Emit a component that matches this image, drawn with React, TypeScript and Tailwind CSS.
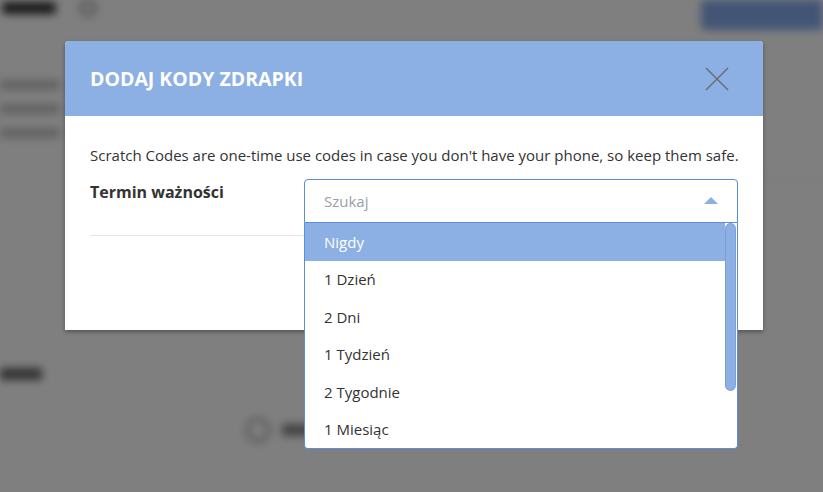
import React from "react";

const options = ["Nigdy", "1 Dzień", "2 Dni", "1 Tydzień", "2 Tygodnie", "1 Miesiąc"];

function BackgroundPage() {
  return (
    <div className="w-full h-full blur-[4px] bg-white">
      <div className="flex items-start justify-between">
        <div className="flex items-center gap-6 pl-[2px] pt-0">
          <div className="h-[12px] w-[54px] bg-[#333] rounded-sm" />
          <div className="h-[16px] w-[16px] rounded-full border-2 border-[#666]" />
        </div>
        <div className="h-[30px] w-[122px] bg-[#86aaeb] rounded-sm" />
      </div>
      <div className="flex flex-col gap-[14px] pt-[50px]">
        <div className="h-[10px] w-[60px] bg-[#c4c4c4]" />
        <div className="h-[10px] w-[60px] bg-[#c4c4c4]" />
        <div className="h-[10px] w-[60px] bg-[#c4c4c4]" />
      </div>
      <div className="ml-auto mt-[40px] h-[2px] w-[80px] bg-[#eeeeee]" />
      <div className="pt-[188px]">
        <div className="h-[12px] w-[42px] bg-[#666]" />
      </div>
      <div className="flex items-center gap-3 pl-[246px] pt-[38px]">
        <div className="h-[24px] w-[24px] rounded-full border-2 border-[#777]" />
        <div className="h-[12px] w-[50px] bg-[#888]" />
      </div>
    </div>
  );
}

function CodesSelect() {
  return (
    <div className="relative w-[434px]">
      <div className="h-[44px] border border-[#5b8dd8] rounded-t-[4px] bg-white flex items-center justify-between pl-[19px] pr-[19px]">
        <span className="text-[15px] text-[#9aa0a8]">Szukaj</span>
        <svg width="14" height="8" viewBox="0 0 14 8" className="fill-[#8cb0e3]">
          <path d="M7 0 L14 7 L0 7 Z" />
        </svg>
      </div>
      <div className="absolute left-0 right-0 top-full bg-white border border-t-0 border-[#5b8dd8] rounded-b-[4px] flex">
        <ul className="flex-1 h-[225px] overflow-hidden">
          {options.map((o, i) => (
            <li
              key={o}
              className={
                i === 0
                  ? "h-[37.5px] flex items-center pl-[19px] text-[15px] bg-[#8cb0e3] text-white"
                  : "h-[37.5px] flex items-center pl-[19px] text-[15px] text-[#333]"
              }
            >
              {o}
            </li>
          ))}
        </ul>
        <div className="w-[12px] h-[225px] pr-[1px]">
          <div className="h-[168px] w-[11px] rounded-full bg-[#8cb0e3] border border-[#7a9fd4]" />
        </div>
      </div>
    </div>
  );
}

export default function App() {
  return (
    <div className="relative w-[823px] h-[492px] overflow-hidden font-['Open_Sans',sans-serif]">
      <BackgroundPage />
      <div className="absolute inset-0 bg-black/50 pt-[41px] pl-[65px]">
        <div className="w-[698px] bg-white rounded-t-[4px] shadow-[0_2px_4px_rgba(0,0,0,0.35)]">
          <div className="h-[75px] bg-[#8cb0e3] rounded-t-[4px] flex items-center justify-between pl-[25px] pr-[34px]">
            <h2 className="text-[19.5px] font-bold text-white">DODAJ KODY ZDRAPKI</h2>
            <svg width="24" height="24" viewBox="0 0 24 24" className="stroke-[#6b6f76]" strokeWidth="1.6">
              <path d="M1 1 L23 23 M23 1 L1 23" />
            </svg>
          </div>
          <div className="px-[25px] pt-[29px] pb-[94px]">
            <p className="text-[15px] leading-[20px] text-[#333] whitespace-nowrap">
              Scratch Codes are one-time use codes in case you don't have your phone, so keep them safe.
            </p>
            <div className="flex mt-[14px]">
              <div className="w-[214px] pt-[1px] text-[16px] font-bold text-[#333]">Termin ważności</div>
              <CodesSelect />
            </div>
            <div className="mt-[12px] border-t border-[#e6e6e6]" />
          </div>
        </div>
      </div>
    </div>
  );
}
